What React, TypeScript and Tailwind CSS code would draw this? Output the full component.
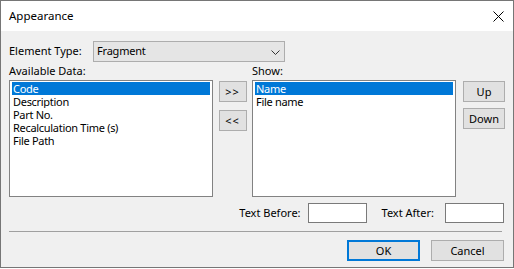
import React from 'react';

const availableData = ['Code', 'Description', 'Part No.', 'Recalculation Time (s)', 'File Path'];
const shown = ['Name', 'File name'];

function ListBox({ items, selected }: { items: string[]; selected: number }) {
  return (
    <div className="h-[117px] w-[204px] overflow-hidden border border-[#828282] bg-white p-[1px]">
      {items.map((item, i) => (
        <div
          key={item}
          className={
            i === selected
              ? 'mx-[1px] h-[13px] overflow-hidden bg-[#0078d7] pl-[1px] leading-[13px] tracking-[-0.3px] text-white'
              : 'mx-[1px] h-[13px] overflow-hidden pl-[1px] leading-[13px] tracking-[-0.3px] text-black'
          }
        >
          {item}
        </div>
      ))}
    </div>
  );
}

function Button({ children, className = '' }: { children: React.ReactNode; className?: string }) {
  return (
    <div
      className={`flex items-center justify-center border border-[#adadad] bg-[#e1e1e1] leading-none text-black ${className}`}
    >
      {children}
    </div>
  );
}

export default function App() {
  return (
    <div className="h-[269px] w-[514px] bg-white">
      <div className="flex h-[268px] w-[514px] flex-col border border-[#767676] bg-[#f0f0f0] font-['Noto_Sans',sans-serif] text-[11px] text-black">
        {/* title bar */}
        <div className="flex h-[30px] items-center justify-between bg-white pl-[8px] pr-[9px]">
          <span className="text-[11.5px]">Appearance</span>
          <svg width="11" height="11" viewBox="0 0 11 11" className="text-black">
            <path d="M0.5 0.5 L10.5 10.5 M10.5 0.5 L0.5 10.5" stroke="currentColor" strokeWidth="1" />
          </svg>
        </div>

        <div className="flex flex-1 flex-col px-[8px] pt-[10px]">
          {/* element type */}
          <div className="flex h-[21px] items-center">
            <span className="w-[84px]">Element Type:</span>
            <div className="flex h-[21px] w-[192px] items-center justify-between border border-[#adadad] bg-[#e5e5e5] pl-[3px] pr-[4px]">
              <span className="tracking-[-0.2px]">Fragment</span>
              <svg width="9" height="6" viewBox="0 0 9 6" className="mt-[3px]">
                <path d="M0.5 0.5 L4.5 4.5 L8.5 0.5" fill="none" stroke="#333" strokeWidth="1" />
              </svg>
            </div>
          </div>

          {/* labels */}
          <div className="flex h-[18px] items-center pt-[1px]">
            <span className="w-[243px]">Available Data:</span>
            <span>Show:</span>
          </div>

          {/* lists */}
          <div className="flex">
            <ListBox items={availableData} selected={0} />
            <div className="flex w-[39px] flex-col items-center pt-[1px]">
              <Button className="h-[21px] w-[28px] tracking-[1px]">&gt;&gt;</Button>
              <Button className="mt-[8px] h-[21px] w-[28px] tracking-[1px]">&lt;&lt;</Button>
            </div>
            <ListBox items={shown} selected={0} />
            <div className="ml-[7px] flex flex-col pt-[1px]">
              <Button className="h-[21px] w-[42px]">Up</Button>
              <Button className="mt-[6px] h-[21px] w-[42px]">Down</Button>
            </div>
          </div>

          {/* text before / after */}
          <div className="mt-[6px] flex h-[20px] items-center justify-end pr-[1px]">
            <span>Text Before:</span>
            <div className="ml-[7px] h-[20px] w-[59px] border border-[#7a7a7a] bg-white" />
            <span className="ml-[15px]">Text After:</span>
            <div className="ml-[11px] h-[20px] w-[59px] border border-[#7a7a7a] bg-white" />
          </div>

          {/* separator */}
          <div className="mt-[8px] mr-[3px] h-[1px] bg-[#a0a0a0]" />

          {/* buttons */}
          <div className="mt-[8px] flex justify-end gap-[11px] pr-[1px]">
            <div className="flex h-[21px] w-[73px] items-center justify-center border-2 border-[#0078d7] bg-[#e1e1e1] leading-none">
              OK
            </div>
            <Button className="h-[21px] w-[73px]">Cancel</Button>
          </div>
        </div>
      </div>
    </div>
  );
}
